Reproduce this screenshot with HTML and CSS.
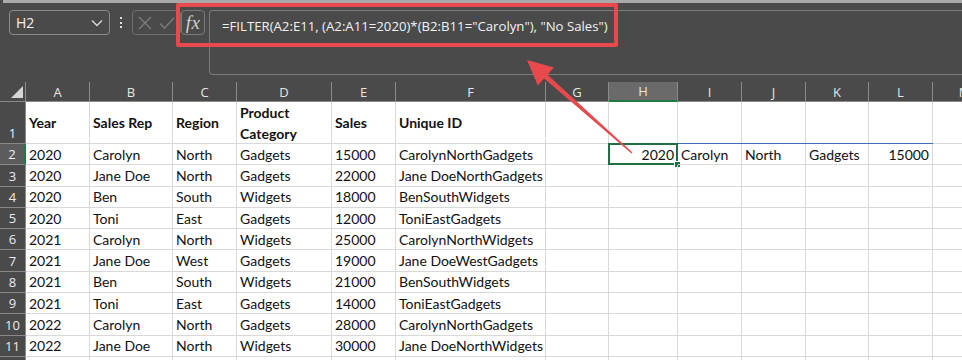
FILE: index.html
```html
<!DOCTYPE html>
<html lang="en">
<head>
  <meta charset="UTF-8" />
  <title>FILTER example</title>
  <link rel="stylesheet" href="styles.css">
</head>
<body>
  <div class="app">
    <div class="topline"></div>

    <div class="formula-bar">
      <div class="namebox">
        <span>H2</span>
        <svg class="chev" width="12" height="8" viewBox="0 0 12 8"><path d="M1 1.5 L6 6.5 L11 1.5" fill="none" stroke="#d8d8d8" stroke-width="1.4"/></svg>
      </div>
      <div class="dots"><i></i><i></i><i></i></div>
      <div class="btns">
        <svg width="14" height="14" viewBox="0 0 14 14"><path d="M1 1 L13 13 M13 1 L1 13" stroke="#7c7c7c" stroke-width="1.3"/></svg>
        <svg width="16" height="14" viewBox="0 0 16 14"><path d="M1 7.5 L5.5 12 L15 2" fill="none" stroke="#7c7c7c" stroke-width="1.3"/></svg>
      </div>
      <div class="fxbtn">fx</div>
      <div class="formula">=FILTER(A2:E11, (A2:A11=2020)*(B2:B11="Carolyn"), "No Sales")</div>
    </div>

    <div class="sheet">
      <div class="corner"><span class="tri"></span></div>
      <div class="colhead">A</div>
      <div class="colhead">B</div>
      <div class="colhead">C</div>
      <div class="colhead">D</div>
      <div class="colhead">E</div>
      <div class="colhead">F</div>
      <div class="colhead">G</div>
      <div class="colhead active">H</div>
      <div class="colhead">I</div>
      <div class="colhead">J</div>
      <div class="colhead">K</div>
      <div class="colhead">L</div>
      <div class="colhead">M</div>
    </div>
    <div id="grid" class="sheet body-rows"></div>

    <div class="callout"></div>
    <svg class="arrow" width="962" height="360" viewBox="0 0 962 360">
      <polygon points="527,60 553.8,67.6 547.5,74.7 632.5,152.4 631.5,153.6 544.1,78.5 537.8,85.6" fill="#e8494c"/>
    </svg>
  </div>

  <script>
    const rows = [
      ["Year", "Sales Rep", "Region", "Product Category", "Sales", "Unique ID"],
      ["2020", "Carolyn", "North", "Gadgets", "15000"],
      ["2020", "Jane Doe", "North", "Gadgets", "22000"],
      ["2020", "Ben", "South", "Widgets", "18000"],
      ["2020", "Toni", "East", "Gadgets", "12000"],
      ["2021", "Carolyn", "North", "Widgets", "25000"],
      ["2021", "Jane Doe", "West", "Gadgets", "19000"],
      ["2021", "Ben", "South", "Widgets", "21000"],
      ["2021", "Toni", "East", "Gadgets", "14000"],
      ["2022", "Carolyn", "North", "Gadgets", "28000"],
      ["2022", "Jane Doe", "North", "Widgets", "30000"],
      []
    ];

    const grid = document.getElementById("grid");
    const COLS = 13; // A..M

    rows.forEach((r, i) => {
      const rowNum = i + 1;
      const head = document.createElement("div");
      head.className = "rowhead" + (rowNum === 2 ? " active" : "");
      // last row only peeks in at the bottom edge
      head.textContent = r.length || rowNum === 1 ? rowNum : "";
      grid.appendChild(head);

      let cells = r.slice();
      if (i > 0 && r.length) cells.push(r[1] + r[2] + r[3]);
      while (cells.length < COLS) cells.push("");

      // spilled result of the FILTER formula in H2:L2
      if (rowNum === 2) {
        cells[7] = "2020"; cells[8] = "Carolyn"; cells[9] = "North";
        cells[10] = "Gadgets"; cells[11] = "15000";
      }

      cells.forEach((text, c) => {
        const cell = document.createElement("div");
        cell.className = "cell";
        if (rowNum === 1) cell.className += " hdr";
        if (rowNum === 2 && (c === 7 || c === 11)) cell.className += " num";
        cell.textContent = text;
        if (rowNum === 2 && c === 7) {
          cell.innerHTML += '<span class="spill"></span><span class="sel"></span><span class="handle"></span>';
        }
        grid.appendChild(cell);
      });
    });
  </script>
</body>
</html>
```

FILE: styles.css
```css
body {
  margin: 0;
  background: #4a4a4a;
  font-family: 'Lato', 'Liberation Sans', sans-serif;
}
.app {
  position: relative;
  width: 962px;
  height: 360px;
  overflow: hidden;
  background: #4a4a4a;
}
.topline {
  height: 3px;
  background: #a9a9a9;
  margin-left: 3px;
}

/* formula bar */
.formula-bar {
  display: flex;
  align-items: flex-start;
  height: 79px;
  padding: 7px 0 0 9px;
  box-sizing: border-box;
  font-family: 'Open Sans', 'Noto Sans', sans-serif;
  color: #f2f2f2;
}
.namebox {
  width: 101px;
  height: 25px;
  box-sizing: border-box;
  border: 1px solid #8c8c8c;
  border-radius: 4px;
  display: flex;
  align-items: center;
  justify-content: space-between;
  padding: 0 6px;
  font-size: 14px;
}
.chev {
  margin-top: 1px;
}
.dots {
  width: 22px;
  height: 25px;
  display: flex;
  flex-direction: column;
  align-items: center;
  justify-content: center;
  gap: 2.5px;
}
.dots i {
  width: 2px;
  height: 2px;
  background: #e0e0e0;
}
.btns {
  width: 49px;
  height: 25px;
  box-sizing: border-box;
  border: 1px solid #6e6e6e;
  border-radius: 4px;
  display: flex;
  align-items: center;
  gap: 7px;
  padding-left: 5px;
}
.fxbtn {
  width: 24px;
  height: 25px;
  box-sizing: border-box;
  border: 1px solid #7a7a7a;
  border-radius: 4px;
  font-family: 'Liberation Serif', serif;
  font-style: italic;
  font-size: 19px;
  color: #cfcfcf;
  display: flex;
  align-items: center;
  justify-content: center;
  letter-spacing: 0.5px;
}
.formula {
  flex: 1;
  height: 65px;
  margin-left: 4px;
  box-sizing: border-box;
  border: 1px solid #7a7a7a;
  border-right: none;
  border-radius: 4px 0 0 4px;
  padding: 3px 0 0 12px;
  font-size: 13.2px;
  line-height: 24px;
  white-space: nowrap;
}

/* sheet grid */
.sheet {
  display: grid;
  grid-template-columns: 26px 64px 83px 64px 95px 64px 150px 63px 69px 64px 64px 63px 64px 64px;
}
.body-rows {
  grid-template-rows: 42px repeat(11, 21.3px);
  background: #ffffff;
}
.corner {
  height: 20px;
  box-sizing: border-box;
  position: relative;
  border-right: 1px solid #8a8a8a;
  border-bottom: 1px solid #8a8a8a;
}
.tri {
  position: absolute;
  right: 2px;
  bottom: 3px;
  width: 12px;
  height: 12px;
  background: #d6d6d6;
  clip-path: polygon(100% 0, 100% 100%, 0 100%);
}
.colhead {
  height: 20px;
  box-sizing: border-box;
  border-right: 1px solid #8a8a8a;
  border-bottom: 1px solid #8a8a8a;
  color: #e6e6e6;
  font-family: 'Open Sans', 'Noto Sans', sans-serif;
  font-size: 13px;
  display: flex;
  align-items: center;
  justify-content: center;
}
.colhead.active {
  background: #6a6a6a;
  border-bottom: 2px solid #1f7a48;
}
.rowhead {
  background: #4a4a4a;
  color: #ececec;
  font-family: 'Open Sans', 'Noto Sans', sans-serif;
  font-size: 13px;
  border-bottom: 1px solid #8a8a8a;
  border-right: 1px solid #8a8a8a;
  display: flex;
  align-items: flex-end;
  justify-content: center;
  padding-bottom: 1px;
  box-sizing: border-box;
  line-height: 18px;
}
.rowhead.active {
  background: #5c5c5c;
  border-right: 2px solid #1f7a48;
}
.cell {
  position: relative;
  border-right: 1px solid #d9d9d9;
  border-bottom: 1px solid #d9d9d9;
  padding: 0 3px;
  font-size: 14px;
  color: #111;
  display: flex;
  align-items: center;
  white-space: nowrap;
  box-sizing: border-box;
}
.cell.hdr {
  font-weight: bold;
  white-space: normal;
  line-height: 21px;
}
.cell.num {
  justify-content: flex-end;
}
.spill {
  position: absolute;
  left: -1px;
  top: -1px;
  width: 325px;
  height: 22px;
  border: 1px solid #3f6fb8;
  box-sizing: border-box;
  pointer-events: none;
}
.sel {
  position: absolute;
  left: -1px;
  top: -1px;
  right: -1px;
  bottom: -1px;
  border: 2px solid #1f6f43;
  pointer-events: none;
}
.handle {
  position: absolute;
  right: -4px;
  bottom: -4px;
  width: 5px;
  height: 5px;
  background: #1f6f43;
  border: 1px solid #fff;
}

/* annotation */
.callout {
  position: absolute;
  left: 176px;
  top: 3px;
  width: 442px;
  height: 44px;
  box-sizing: border-box;
  border: 4px solid #e8494c;
  border-radius: 2px;
}
.arrow {
  position: absolute;
  left: 0;
  top: 0;
  pointer-events: none;
}
```
